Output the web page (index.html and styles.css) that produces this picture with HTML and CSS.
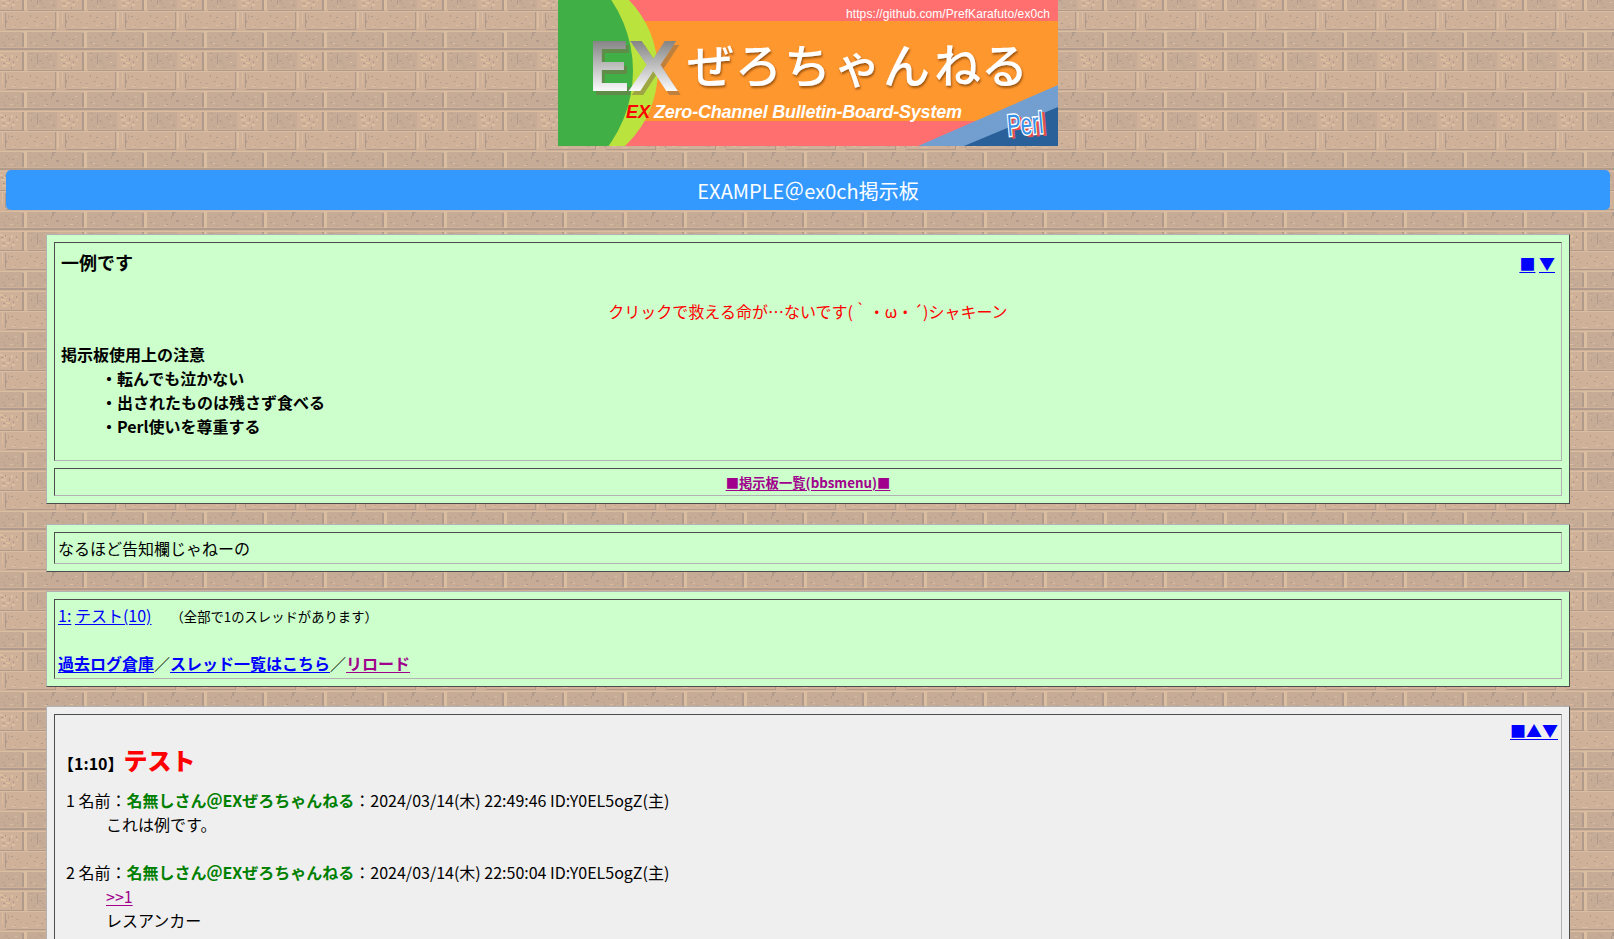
FILE: index.html
```html
<!DOCTYPE html>
<html lang="ja">
<head>
<meta charset="utf-8">
<title>EXAMPLE＠ex0ch掲示板</title>
<link rel="stylesheet" href="styles.css">
</head>
<body>
<header class="banner">
<svg class="banner-art" width="500" height="146" viewBox="0 0 500 146" role="img" aria-label="EXぜろちゃんねる">
  <defs>
    <linearGradient id="metal" gradientUnits="userSpaceOnUse" x1="0" y1="-50" x2="0" y2="0">
      <stop offset="0" stop-color="#858585"/><stop offset="1" stop-color="#fafafa"/>
    </linearGradient>
    <filter id="hard" x="-10%" y="-10%" width="130%" height="130%"><feDropShadow dx="3" dy="4" stdDeviation=".3" flood-color="#80684c" flood-opacity=".5"/></filter>
    <filter id="soft" x="-10%" y="-10%" width="120%" height="130%"><feDropShadow dx="1" dy="2" stdDeviation="1" flood-color="#7a3c00" flood-opacity=".75"/></filter>
  </defs>
  <rect width="500" height="146" fill="#ff6f6f"/>
  <rect y="21" width="500" height="100" fill="#ff972f"/>
  <circle cx="-2" cy="71" r="101.8" fill="#bbe33d"/>
  <circle cx="-52" cy="71" r="127" fill="#3faf46"/>
  <path d="M360 146 500 85V146Z" fill="#729fcf"/>
  <path d="M406 146 500 107V146Z" fill="#2a6099"/>
  <g class="ex" filter="url(#hard)" fill="url(#metal)">
    <text transform="translate(31 91) scale(.84 1)">E</text>
    <text transform="translate(70 91) scale(1.05 1)">X</text>
  </g>
  <g class="kana" filter="url(#soft)"><text x="129 177 226 276 325 376 423" y="83">ぜろちゃんねる</text></g>
  <text class="url" x="288" y="18" textLength="204">https://github.com/PrefKarafuto/ex0ch</text>
  <text class="sub sub-ex" x="68" y="118" textLength="24">EX</text>
  <text class="sub" x="96" y="118" textLength="308">Zero-Channel Bulletin-Board-System</text>
  <g transform="translate(450 136) rotate(-5) scale(.68 1)">
    <text class="perl perl-shadow" x="4" y="2">Perl</text>
    <text class="perl" x="0" y="0">Perl</text>
  </g>
</svg>
</header>
<h1 class="board-title">EXAMPLE＠ex0ch掲示板</h1>
<main>
<section class="panel intro">
  <div class="cell rules">
    <div class="rules-head"><h2>一例です</h2><nav><a href="#menu">■</a> <a href="#thread">▼</a></nav></div>
    <p class="catch">クリックで救える命が…ないです(｀・ω・´)シャキーン</p>
    <dl><dt>掲示板使用上の注意</dt><dd>・転んでも泣かない</dd><dd>・出されたものは残さず食べる</dd><dd>・Perl使いを尊重する</dd></dl>
  </div>
  <div class="cell menu-link" id="menu"><a class="seen" href="#menu">■掲示板一覧(bbsmenu)■</a></div>
</section>
<section class="panel notice"><div class="cell">なるほど告知欄じゃねーの</div></section>
<section class="panel list">
  <div class="cell">
    <p><a href="#thread">1:</a> <a href="#thread">テスト(10)</a><small>（全部で1のスレッドがあります）</small></p>
    <p class="list-links"><a href="#log"><b>過去ログ倉庫</b></a>／<a href="#all"><b>スレッド一覧はこちら</b></a>／<a class="seen" href="#top"><b>リロード</b></a></p>
  </div>
</section>
<section class="panel thread" id="thread">
  <div class="cell">
    <nav class="thread-nav"><a href="#menu">■▲▼</a></nav>
    <h2 class="thread-title"><span>【1:10】</span><strong>テスト</strong></h2>
    <article><div>1 名前：<b>名無しさん＠EXぜろちゃんねる</b>：2024/03/14(木) 22:49:46 ID:Y0EL5ogZ(主)</div><p>これは例です。</p></article>
    <article><div>2 名前：<b>名無しさん＠EXぜろちゃんねる</b>：2024/03/14(木) 22:50:04 ID:Y0EL5ogZ(主)</div><p><a class="seen" href="#thread">&gt;&gt;1</a><br>レスアンカー</p></article>
  </div>
</section>
</main>
</body>
</html>
```
FILE: styles.css
```css
* { box-sizing: border-box; }
html { height: 100%; overflow: hidden; }
body {
  margin: 0 4px 0 6px;
  font: 16px/24px "Noto Sans CJK JP", sans-serif;
  color: #000;
  background: #ceb39c url("data:image/svg+xml,%3Csvg xmlns='http://www.w3.org/2000/svg' width='60' height='60' shape-rendering='crispEdges'%3E%3Crect width='60' height='60' fill='%23ceb198'/%3E%3Cpath fill='%23c6ab97' d='M27 2h30v17H27zM0 42h22v15H0zM27 42h33v15H27z'/%3E%3Cpath fill='%23dbbda0' d='M0 1h60v1H0zM0 21h60v1H0zM0 41h60v1H0zM24 1h3v19h-3zM24 42h3v16h-3zM57 22h2v16h-2zM2 22h1v12h-1zM0 4h3v2H0zM4 6h3v2H4zM1 9h5v2H1zM6 12h4v2H6zM2 15h5v2H2zM11 5h2v3h-2zM12 14h3v2h-3zM16 9h2v2h-2zM30 5h1v1h-1zM37 16h2v1h-2zM45 4h2v1h-2zM50 12h2v1h-2zM12 36h4v1h-4zM22 37h6v1h-6zM36 35h3v1h-3zM45 26h3v1h-3zM50 33h2v1h-2zM33 53h2v1h-2zM44 55h3v1h-3zM10 54h3v1h-3zM15 46h2v1h-2z'/%3E%3Cpath fill='%23b09a8b' d='M0 58h60v2H0zM28 20h32v1H28zM0 20h24v1H0zM6 39h50v1H6zM22 2h2v19h-2zM22 43h2v14h-2zM5 23h1v15h-1zM55 22h1v17h-1zM6 30h1v3H6zM1 7h2v1H1zM5 5h1v2H5zM9 8h1v3H9zM13 11h1v2h-1zM3 13h2v1H3zM16 6h1v2h-1zM11 17h1v2h-1zM37 4h1v10h-1zM31 9h1v2h-1zM46 7h2v1h-2zM50 5h1v2h-1zM42 13h1v1h-1zM53 15h2v1h-2zM33 16h1v1h-1zM11 26h2v1h-2zM20 32h1v1h-1zM30 25h1v2h-1zM41 33h2v1h-2zM45 29h1v1h-1zM36 27h2v1h-2zM15 35h1v1h-1zM52 42h4v1h-4zM52 43h2v3h-2zM51 46h1v3h-1zM56 50h3v2h-3zM41 45h1v2h-1zM35 47h1v1h-1zM30 52h2v1h-2zM46 54h2v1h-2zM6 45h1v2H6zM12 49h2v1h-2zM17 53h1v1h-1zM4 55h2v1H4z'/%3E%3Cpath fill='%23bca390' d='M29 3h4v1h-4zM34 7h2v1h-2zM39 10h3v2h-3zM48 9h2v1h-2zM43 17h3v1h-3zM8 25h1v4H8zM16 29h3v1h-3zM26 33h2v1h-2zM33 31h3v1h-3zM47 36h3v1h-3zM38 44h3v1h-3zM29 47h2v1h-2zM44 49h3v2h-3zM35 55h4v1h-4zM8 48h2v2H8zM14 55h2v1h-2zM2 52h3v1H2z'/%3E%3C/svg%3E") 0 -10px;
}
p, h1, h2, dl, dd { margin: 0; }
a { color: #00f; text-underline-offset: 2px; }
a.seen { color: #a0008c; }
.banner { display: flex; justify-content: center; margin-bottom: 24px; }
.banner-art { display: block; }
.ex { font: bold 72px "Liberation Sans", sans-serif; }
.kana { font: 500 47px "Noto Sans CJK JP", sans-serif; fill: #fff; }
.url { font: 12px "Liberation Sans", sans-serif; fill: #fff; }
.sub { font: italic bold 18px "Liberation Sans", sans-serif; fill: #fff; }
.sub-ex { fill: #f00; }
.perl { font: 30px "Liberation Sans", sans-serif; fill: #3590e8; stroke: #fff; stroke-width: 3px; paint-order: stroke; }
.perl-shadow { fill: #e0504c; stroke: #e0504c; stroke-width: 2px; }
.board-title { height: 40px; border-radius: 5px; background: #39f; color: #fff; font-size: 20px; font-weight: 400; line-height: 42px; text-align: center; }
main { display: flex; flex-direction: column; align-items: center; padding-top: 24px; }
.panel { width: 1524px; padding: 7px; border: 1px solid; border-color: #b2b2b2 #4c4c4c #4c4c4c #b2b2b2; background: #cfc; display: flex; flex-direction: column; gap: 7px; }
.cell { border: 1px solid; border-color: #4c4c4c #b2b2b2 #b2b2b2 #4c4c4c; padding: 3px; }
.intro { height: 270px; margin-bottom: 20px; }
.rules { height: 219px; padding: 5px 6px; }
.rules-head { display: flex; justify-content: space-between; }
.rules-head h2 { font-size: 18px; line-height: 28px; }
.rules-head nav { padding-top: 3px; }
.catch { margin-top: 23px; text-align: center; color: #f00; }
.rules dl { margin-top: 19px; font-weight: 700; }
.rules dd { margin-left: 40px; }
.menu-link { height: 28px; padding: 2px 1px 0; text-align: center; font-size: 13.333px; font-weight: 700; }
.notice { height: 48px; margin-bottom: 19px; }
.notice .cell { height: 32px; }
.list { height: 96px; margin-bottom: 19px; }
.list .cell { height: 80px; }
.list p { height: 24px; }
.list small { font-size: 13.333px; line-height: 20px; margin-left: 19px; }
.list-links { margin-top: 24px; }
.thread { background: #efefef; }
.thread-nav { text-align: right; }
.thread-title { display: flex; align-items: baseline; margin: 0 0 7px; font-size: 16px; line-height: 35px; }
.thread-title strong { font-size: 24px; color: #f00; }
.thread article { margin: 0 0 24px 8px; }
.thread article b { color: green; }
.thread article p { margin-left: 40px; }
```
